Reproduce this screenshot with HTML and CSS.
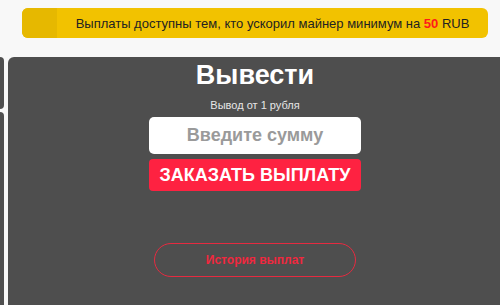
FILE: index.html
```html
<!DOCTYPE html>
<html>
<head>
    <link rel="stylesheet" href="styles.css">
</head>
<body>
    <div class="notice-wrap">
        <div class="notice">
            <div class="notice-side"></div>
            <div class="notice-text">Выплаты доступны тем, кто ускорил майнер минимум на&nbsp;<b>50</b>&nbsp;RUB</div>
        </div>
    </div>

    <div class="main-row">
        <div class="sidebar">
            <div class="side-box side-box-top"></div>
            <div class="side-box side-box-rest"></div>
        </div>

        <div class="panel">
            <h1 class="panel-title">Вывести</h1>
            <div class="panel-hint">Вывод от 1 рубля</div>
            <input class="amount" type="text" placeholder="Введите сумму">
            <button class="order-btn">ЗАКАЗАТЬ ВЫПЛАТУ</button>
            <button class="history-btn">История выплат</button>
        </div>
    </div>
</body>
</html>
```

FILE: styles.css
```css
html, body {
    margin: 0;
    height: 100%;
    overflow: hidden;
}

body {
    font-family: "Liberation Sans", Arial, sans-serif;
    background: #f8f8f8;
    display: flex;
    flex-direction: column;
}

.notice-wrap {
    padding: 8px 12px 0 22px;
}

.notice {
    display: flex;
    height: 30px;
    background: #f2c200;
    border-radius: 6px;
    overflow: hidden;
}

.notice-side {
    width: 35px;
    background: #e6b800;
}

.notice-text {
    flex: 1;
    display: flex;
    align-items: center;
    justify-content: center;
    font-size: 13px;
    color: #222;
    white-space: pre;
}

.notice-text b {
    color: #ff1a1a;
}

.main-row {
    flex: 1;
    display: flex;
    gap: 4px;
    margin-top: 19px;
    margin-right: -2px;
}

.sidebar {
    width: 4px;
    display: flex;
    flex-direction: column;
    gap: 3px;
}

.side-box {
    background: #4f4f4f;
    border-radius: 0 5px 0 0;
}

.side-box-top {
    height: 52px;
    border-radius: 0 5px 5px 0;
}

.side-box-rest {
    flex: 1;
}

.panel {
    flex: 1;
    background: #4e4e4e;
    border-radius: 6px 0 0 0;
    display: flex;
    flex-direction: column;
    align-items: center;
    padding-top: 3px;
}

.panel-title {
    margin: 0;
    font-size: 27px;
    line-height: 31px;
    color: #fff;
}

.panel-hint {
    margin-top: 8px;
    font-size: 11px;
    line-height: 13px;
    color: #e6e6e6;
}

.amount {
    box-sizing: border-box;
    width: 212px;
    height: 37px;
    margin-top: 5px;
    border: none;
    border-radius: 5px;
    background: #fff;
    text-align: center;
    font-family: inherit;
    font-size: 18px;
    font-weight: bold;
    outline: none;
}

.amount::placeholder {
    color: #9a9a9a;
}

.order-btn {
    width: 212px;
    height: 32px;
    margin-top: 5px;
    border: none;
    border-radius: 4px;
    background: #fe2241;
    color: #fff;
    font-family: inherit;
    font-size: 18px;
    font-weight: bold;
    padding: 0;
}

.history-btn {
    width: 202px;
    height: 34px;
    margin-top: 52px;
    border: 1px solid #e62a40;
    border-radius: 17px;
    background: transparent;
    color: #f0283e;
    font-family: inherit;
    font-size: 12px;
    font-weight: bold;
    padding: 0;
}
```
